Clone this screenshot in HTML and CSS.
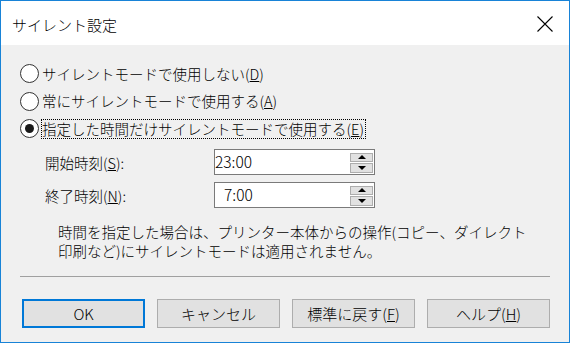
FILE: index.html
```html
<!DOCTYPE html>
<html lang="ja">
<head>
<meta charset="utf-8">
<link rel="stylesheet" href="styles.css">
</head>
<body>
<div class="window">
  <div class="titlebar">
    <span class="title">サイレント設定</span>
    <svg class="close" width="16" height="16" viewBox="0 0 16 16"><path d="M0.5 0.5 L15.5 15.5 M15.5 0.5 L0.5 15.5" stroke="#000" stroke-width="1.1" fill="none"/></svg>
  </div>
  <div class="content">
    <div class="radios">
      <div class="radio"><span class="circle"></span><span class="rlabel">サイレントモードで使用しない(<u>D</u>)</span></div>
      <div class="radio"><span class="circle"></span><span class="rlabel">常にサイレントモードで使用する(<u>A</u>)</span></div>
      <div class="radio"><span class="circle checked"></span><span class="rlabel focus">指定した時間だけサイレントモードで使用する(<u>E</u>)</span></div>
    </div>
    <div class="times">
      <span class="tlabel">開始時刻(<u>S</u>):</span>
      <div class="spin"><span class="val">23:00</span><span class="arrows"><span class="btn up"></span><span class="btn down"></span></span></div>
      <span class="tlabel">終了時刻(<u>N</u>):</span>
      <div class="spin"><span class="val pad">7:00</span><span class="arrows"><span class="btn up"></span><span class="btn down"></span></span></div>
    </div>
    <p class="note">時間を指定した場合は、プリンター本体からの操作(コピー、ダイレクト<br>印刷など)にサイレントモードは適用されません。</p>
    <div class="sep"></div>
    <div class="buttons">
      <button class="b default">OK</button>
      <button class="b">キャンセル</button>
      <button class="b">標準に戻す(<u>F</u>)</button>
      <button class="b">ヘルプ(<u>H</u>)</button>
    </div>
  </div>
</div>
</body>
</html>
```
FILE: styles.css
```css
* { box-sizing: border-box; }
html, body { margin: 0; padding: 0; }
body {
  width: 570px;
  height: 343px;
  font-family: "Noto Sans CJK JP", "Noto Sans", sans-serif;
  font-weight: 300;
  color: #000;
}
.window {
  width: 570px;
  height: 343px;
  border: 1px solid #1883d7;
  background: #f0f0f0;
  display: flex;
  flex-direction: column;
}
.titlebar {
  height: 44px;
  background: #fff;
  display: flex;
  align-items: center;
  justify-content: space-between;
  padding: 2px 16px 0 11px;
}
.title {
  font-size: 15px;
  line-height: 1;
  color: #000;
}
.close { display: block; }
.content {
  padding: 15px 19px 0 18px;
  font-size: 14.5px;
}
.radios { display: flex; flex-direction: column; }
.radio {
  height: 27.5px;
  display: flex;
  align-items: center;
  padding-left: 1px;
}
.circle {
  width: 19px;
  height: 19px;
  border: 1px solid #333;
  border-radius: 50%;
  background: #fff;
  margin-right: 3px;
  display: flex;
  align-items: center;
  justify-content: center;
  flex: none;
}
.circle.checked::after {
  content: "";
  width: 9px;
  height: 9px;
  border-radius: 50%;
  background: #1a1a1a;
}
.rlabel { line-height: 18px; white-space: nowrap; }
.focus { outline: 1px dotted #000; outline-offset: 0; padding-right: 1px; }
u { text-decoration: underline; text-underline-offset: 1px; }
.times {
  margin-top: 6.5px;
  padding-left: 26px;
  display: grid;
  grid-template-columns: 169px 161px;
  grid-auto-rows: 26px;
  row-gap: 7px;
  align-items: center;
}
.tlabel { white-space: nowrap; }
.spin {
  height: 26px;
  border: 1px solid #7a7a7a;
  background: #fff;
  display: flex;
  align-items: center;
  justify-content: space-between;
  padding: 0 1px 0 0;
  font-size: 15.5px;
}
.val { line-height: 1; }
.val.pad { padding-left: 9px; }
.arrows {
  display: flex;
  flex-direction: column;
  gap: 1px;
  margin-top: 1px;
}
.btn {
  width: 23px;
  height: 9.5px;
  border: 1px solid #adadad;
  background: #e1e1e1;
  display: flex;
  align-items: center;
  justify-content: center;
}
.btn.up::after {
  content: "";
  border-left: 4px solid transparent;
  border-right: 4px solid transparent;
  border-bottom: 4px solid #000;
}
.btn.down::after {
  content: "";
  border-left: 4px solid transparent;
  border-right: 4px solid transparent;
  border-top: 4px solid #000;
}
.note {
  margin: 14px 0 0 39px;
  font-size: 14.5px;
  line-height: 19px;
  white-space: nowrap;
}
.sep {
  margin-top: 16px;
  margin-left: 1px;
  height: 1px;
  background: #a0a0a0;
}
.buttons {
  margin-top: 22px;
  padding-left: 3px;
  display: flex;
  gap: 12px;
}
.b {
  width: 123px;
  height: 29px;
  border: 1px solid #adadad;
  background: #e1e1e1;
  font-family: inherit;
  font-weight: 300;
  font-size: 15px;
  color: #000;
  padding: 0;
  line-height: 1;
}
.b.default { border: 2px solid #0078d7; }
```
